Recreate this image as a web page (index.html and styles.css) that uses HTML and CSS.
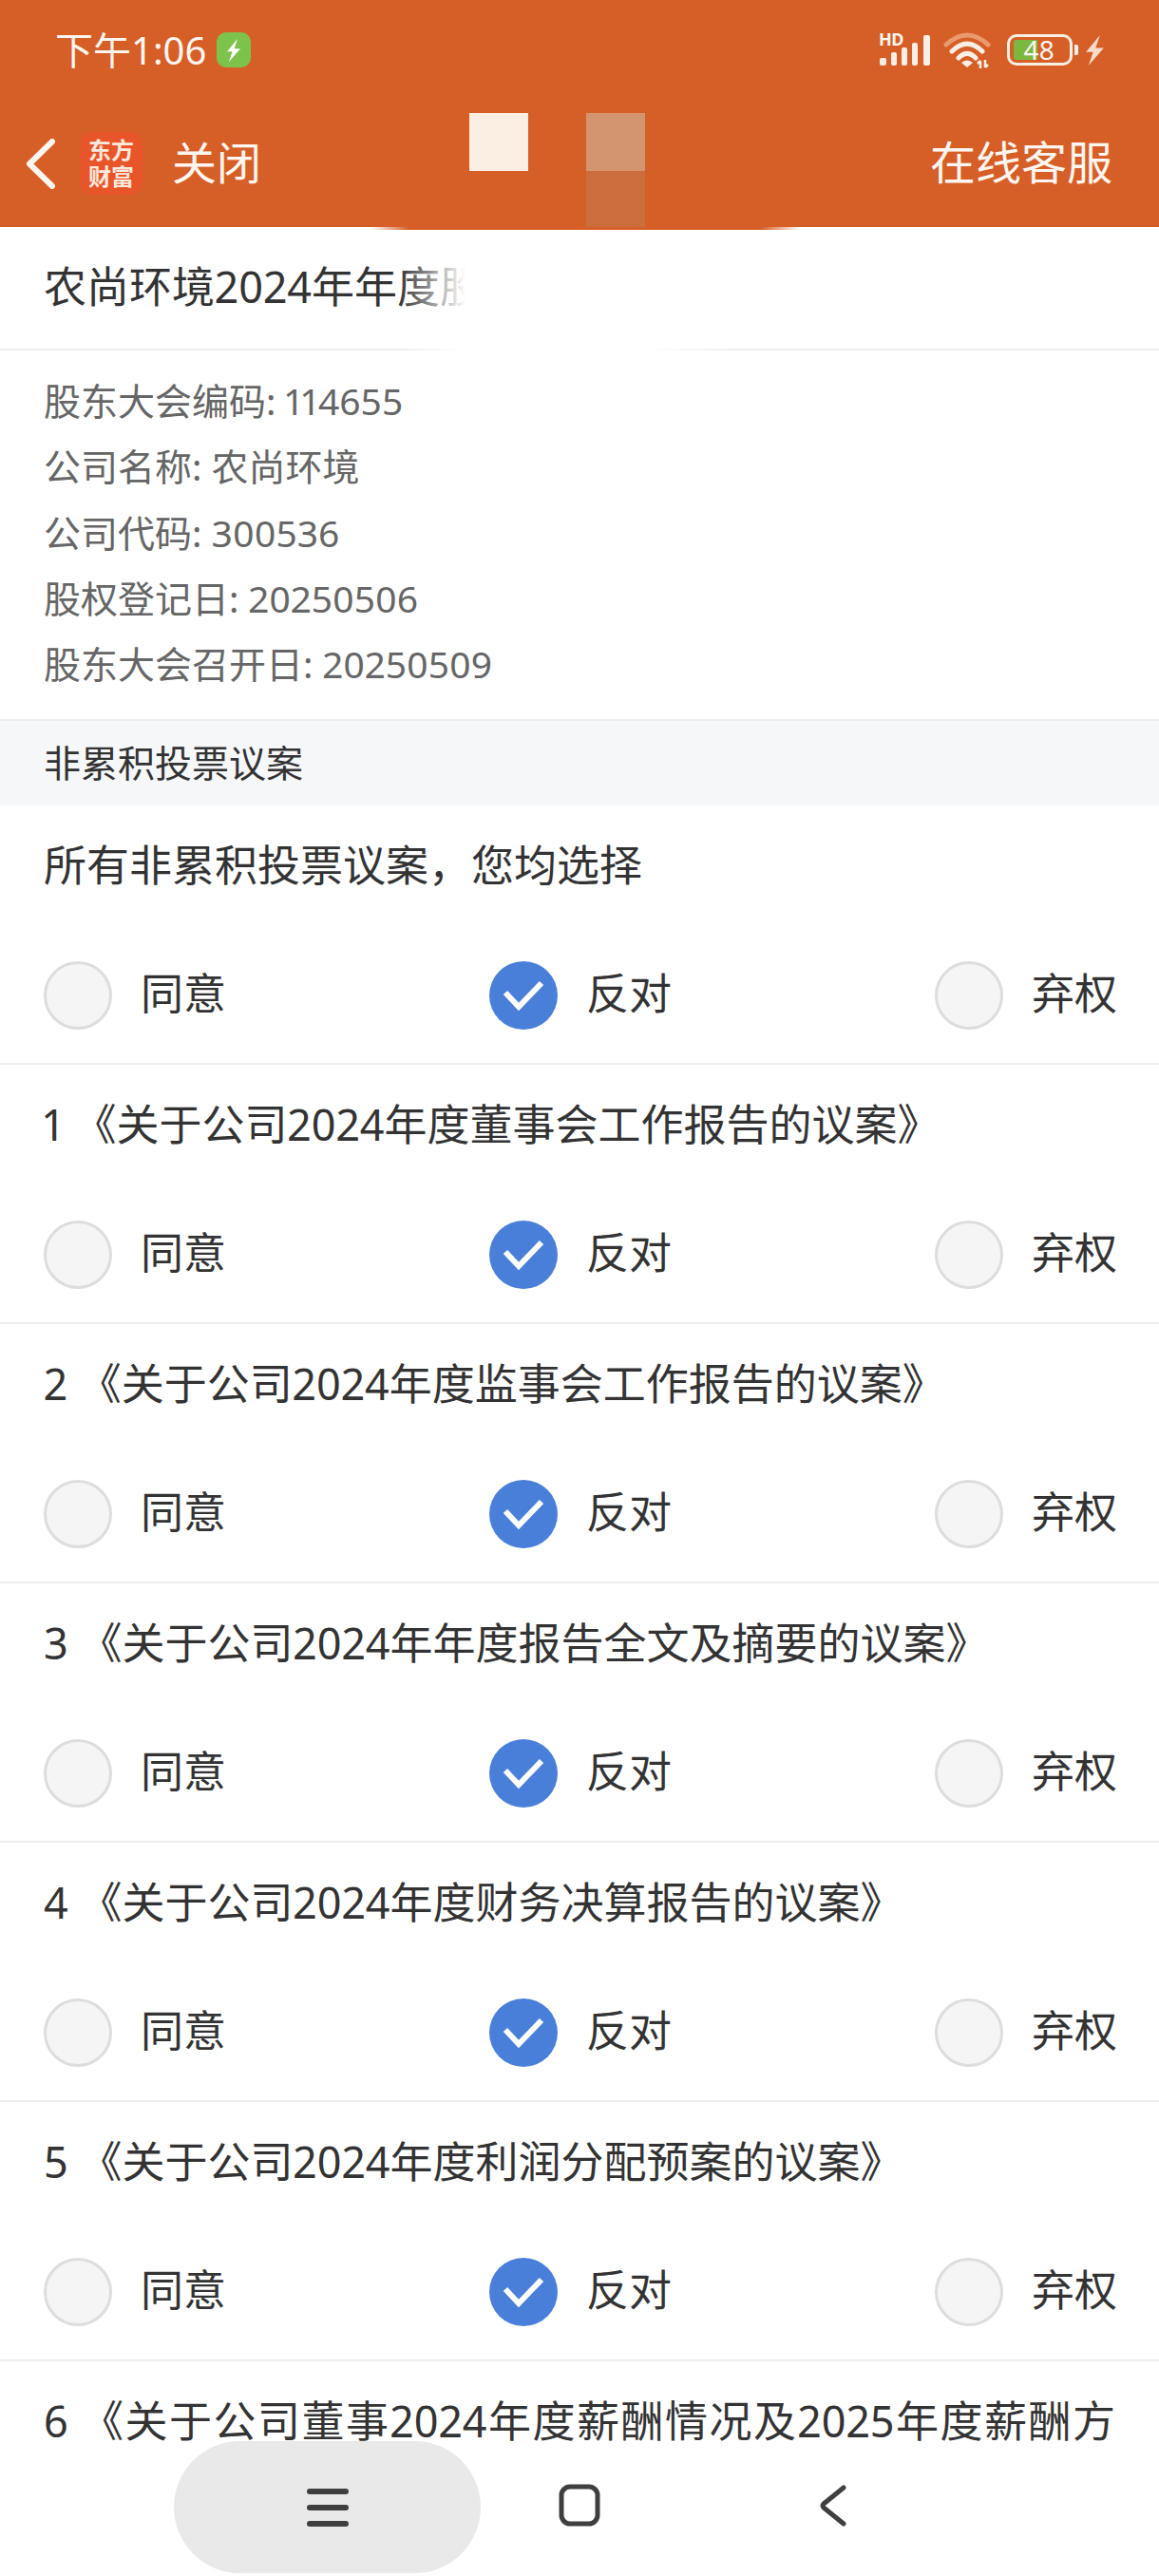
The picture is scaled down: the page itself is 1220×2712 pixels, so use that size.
FILE: index.html
```html
<!DOCTYPE html>
<html lang="zh-CN">
<head>
<meta charset="utf-8">
<title>股东大会投票</title>
<link rel="stylesheet" href="styles.css">
</head>
<body>
<div class="page">
  <header class="top">
    <div class="status">
      <div class="status-left">
        <span class="time">下午1:06</span>
        <span class="charge-badge">
          <svg class="charge-bolt" viewBox="0 0 14 24"><path d="M11 0 0 13.300h5.600L2 24 14 10.200H7.600z"/></svg>
        </span>
      </div>
      <div class="status-right">
        <span class="signal">
          <span class="hd">HD</span>
          <svg class="signal-bars" viewBox="0 0 56 32"><rect x="1" y="24" width="7" height="8" rx="2"/><rect x="13" y="18" width="6" height="14" rx="2"/><rect x="24" y="13" width="6" height="19" rx="2"/><rect x="35" y="8" width="6" height="24" rx="2"/><rect x="47" y="0" width="7" height="32" rx="2"/></svg>
        </span>
        <svg class="wifi" viewBox="0 0 52 40" fill="none">
          <path class="wifi-outer" d="M3 14Q25-6 47 14"/>
          <path class="wifi-arc" d="M9 21Q25 5 41 21"/>
          <path class="wifi-arc" d="M16 28Q25 19 34 28"/>
          <path class="wifi-dot" d="M19 33Q25 28 31 33L25 38z"/>
          <path class="wifi-arrow" d="M39 39V31M36 34l3-3M44 30v8M47 35l-3 3"/>
        </svg>
        <span class="battery">
          <span class="battery-fill"></span>
          <span class="battery-num">48</span>
        </span>
        <span class="battery-nub"></span>
        <svg class="side-bolt" viewBox="0 0 14 24"><path d="M11 0 0 13.300h5.600L2 24 14 10.200H7.600z"/></svg>
      </div>
    </div>
    <div class="bar">
      <svg class="back" viewBox="0 0 31 53" fill="none"><path d="M28 3 4 26.500 28 50"/></svg>
      <span class="logo"><span>东方</span><span>财富</span></span>
      <span class="close">关闭</span>
      <span class="service">在线客服</span>
    </div>
    <span class="patch patch-light"></span>
    <span class="patch patch-mid"></span>
    <span class="patch patch-low"></span>
  </header>
  <span class="edge"></span>

  <section class="meeting">
    <h1 class="meeting-title">农尚环境2024年年度股</h1>
    <span class="title-fade"></span>
  </section>

  <section class="info">
    <p>股东大会编码: 114655</p>
    <p>公司名称: 农尚环境</p>
    <p>公司代码: 300536</p>
    <p>股权登记日: 20250506</p>
    <p>股东大会召开日: 20250509</p>
  </section>

  <div class="section-head">非累积投票议案</div>

  <section class="row">
    <div class="row-title">所有非累积投票议案，您均选择</div>
    <div class="options">
      <div class="opt"><span class="radio"></span><span class="opt-label">同意</span></div>
      <div class="opt"><span class="radio on"><svg viewBox="0 0 72 72" fill="none"><path d="M17 33 31 48 55 23"/></svg></span><span class="opt-label">反对</span></div>
      <div class="opt"><span class="radio"></span><span class="opt-label">弃权</span></div>
    </div>
  </section>
  <section class="row">
    <div class="row-title">1 《关于公司2024年度董事会工作报告的议案》</div>
    <div class="options">
      <div class="opt"><span class="radio"></span><span class="opt-label">同意</span></div>
      <div class="opt"><span class="radio on"><svg viewBox="0 0 72 72" fill="none"><path d="M17 33 31 48 55 23"/></svg></span><span class="opt-label">反对</span></div>
      <div class="opt"><span class="radio"></span><span class="opt-label">弃权</span></div>
    </div>
  </section>
  <section class="row">
    <div class="row-title">2 《关于公司2024年度监事会工作报告的议案》</div>
    <div class="options">
      <div class="opt"><span class="radio"></span><span class="opt-label">同意</span></div>
      <div class="opt"><span class="radio on"><svg viewBox="0 0 72 72" fill="none"><path d="M17 33 31 48 55 23"/></svg></span><span class="opt-label">反对</span></div>
      <div class="opt"><span class="radio"></span><span class="opt-label">弃权</span></div>
    </div>
  </section>
  <section class="row">
    <div class="row-title">3 《关于公司2024年年度报告全文及摘要的议案》</div>
    <div class="options">
      <div class="opt"><span class="radio"></span><span class="opt-label">同意</span></div>
      <div class="opt"><span class="radio on"><svg viewBox="0 0 72 72" fill="none"><path d="M17 33 31 48 55 23"/></svg></span><span class="opt-label">反对</span></div>
      <div class="opt"><span class="radio"></span><span class="opt-label">弃权</span></div>
    </div>
  </section>
  <section class="row">
    <div class="row-title">4 《关于公司2024年度财务决算报告的议案》</div>
    <div class="options">
      <div class="opt"><span class="radio"></span><span class="opt-label">同意</span></div>
      <div class="opt"><span class="radio on"><svg viewBox="0 0 72 72" fill="none"><path d="M17 33 31 48 55 23"/></svg></span><span class="opt-label">反对</span></div>
      <div class="opt"><span class="radio"></span><span class="opt-label">弃权</span></div>
    </div>
  </section>
  <section class="row">
    <div class="row-title">5 《关于公司2024年度利润分配预案的议案》</div>
    <div class="options">
      <div class="opt"><span class="radio"></span><span class="opt-label">同意</span></div>
      <div class="opt"><span class="radio on"><svg viewBox="0 0 72 72" fill="none"><path d="M17 33 31 48 55 23"/></svg></span><span class="opt-label">反对</span></div>
      <div class="opt"><span class="radio"></span><span class="opt-label">弃权</span></div>
    </div>
  </section>
  <section class="row">
    <div class="row-title">6 《关于公司董事2024年度薪酬情况及2025年度薪酬方案的议案》</div>
  </section>

  <nav class="nav">
    <span class="nav-pill">
      <svg class="nav-menu" viewBox="0 0 44 40"><rect y="0" width="44" height="6" rx="3"/><rect y="17" width="44" height="6" rx="3"/><rect y="34" width="44" height="6" rx="3"/></svg>
    </span>
    <svg class="nav-home" viewBox="0 0 44 45" fill="none"><rect x="3" y="3" width="38" height="39" rx="9"/></svg>
    <svg class="nav-back" viewBox="0 0 30 44" fill="none"><path d="M26 3 5 20a3 3 0 0 0 0 4L26 41"/></svg>
  </nav>
</div>
</body>
</html>
```

FILE: styles.css
```css
* { box-sizing: border-box; }

html, body {
  margin: 0;
  padding: 0;
  background: #fff;
}

.page {
  position: relative;
  width: 1220px;
  height: 2712px;
  overflow: hidden;
  font-family: "Noto Sans", "Noto Sans CJK SC", sans-serif;
  font-variant-numeric: proportional-nums;
  color: #333;
}

/* header */
.top {
  position: relative;
  height: 239px;
  background: #d65f27;
  color: #fdf6f0;
}

.status {
  display: flex;
  align-items: center;
  justify-content: space-between;
  height: 105px;
  padding: 0 58px 0 58px;
}

.status-left,
.status-right {
  display: flex;
  align-items: center;
}

.time {
  font-size: 40px;
  line-height: 48px;
  font-variant-numeric: tabular-nums;
}

.charge-badge {
  display: flex;
  align-items: center;
  justify-content: center;
  width: 36px;
  height: 37px;
  margin-left: 11px;
  border-radius: 10px;
  background: #7dc34b;
}

.charge-bolt {
  width: 14px;
  height: 24px;
  fill: #fff;
}

.signal {
  position: relative;
  width: 56px;
  height: 34px;
  margin-top: 1px;
}

.hd {
  position: absolute;
  left: 0;
  top: -4px;
  font-size: 18px;
  line-height: 18px;
  font-weight: 700;
  letter-spacing: -0.5px;
}

.signal-bars {
  display: block;
  width: 56px;
  height: 34px;
  fill: #fbeee4;
}

.wifi {
  width: 52px;
  height: 40px;
  margin-left: 12px;
}

.wifi-outer {
  stroke: #ea9a6f;
  stroke-width: 5;
  stroke-linecap: round;
}

.wifi-arc {
  stroke: #fbeee4;
  stroke-width: 5;
  stroke-linecap: round;
}

.wifi-dot {
  fill: #fbeee4;
}

.wifi-arrow {
  stroke: #fbeee4;
  stroke-width: 2.500;
}

.battery {
  position: relative;
  display: flex;
  align-items: center;
  justify-content: flex-end;
  width: 69px;
  height: 33px;
  margin-left: 15px;
  padding-right: 16px;
  border: 3px solid #fbeee4;
  border-radius: 10px;
}

.battery-fill {
  position: absolute;
  left: 4px;
  top: 3px;
  width: 25px;
  height: 21px;
  background: #7ab83f;
  border-radius: 2px 0 0 2px;
}

.battery-num {
  position: relative;
  font-size: 28px;
  line-height: 27px;
}

.battery-nub {
  width: 4px;
  height: 11px;
  margin-left: 2px;
  border-radius: 0 2px 2px 0;
  background: #fbeee4;
}

.side-bolt {
  width: 19px;
  height: 32px;
  margin-left: 8px;
  fill: #f6dccb;
}

.bar {
  display: flex;
  align-items: center;
  height: 134px;
  padding: 0 49px 0 27px;
}

.back {
  width: 31px;
  height: 53px;
  stroke: #fdf6f0;
  stroke-width: 6;
  stroke-linecap: round;
  stroke-linejoin: round;
}

.logo {
  display: flex;
  flex-direction: column;
  align-items: center;
  justify-content: center;
  width: 66px;
  height: 66px;
  margin-left: 26px;
  border-radius: 14px;
  background: #e9552a;
  font-size: 24px;
  line-height: 28px;
  font-weight: 700;
  color: #fde9dc;
}

.close {
  margin-left: 31px;
  font-size: 47px;
  line-height: 60px;
  margin-top: -3px;
}

.service {
  margin-left: auto;
  font-size: 48px;
  line-height: 60px;
  margin-top: -3px;
}

/* masked area over the header */
.patch {
  position: absolute;
  left: 617px;
  top: 119px;
  width: 62px;
  height: 61px;
}

.patch-light {
  left: 494px;
  background: #fbeee2;
}

.patch-mid {
  background: #d39470;
}

.patch-low {
  top: 180px;
  height: 62px;
  background: #cc6e3c;
}

.edge {
  position: absolute;
  left: 390px;
  top: 239px;
  width: 452px;
  height: 3px;
  background: linear-gradient(90deg, rgba(214, 95, 39, 0), #d65f27 9%, #d65f27 91%, rgba(214, 95, 39, 0));
}

/* meeting */
.meeting {
  position: relative;
  display: flex;
  align-items: center;
  height: 130px;
  padding: 0 46px 3px;
  border-bottom: 2px solid #eeeeee;
}

.meeting-title {
  margin: 0;
  font-size: 45px;
  line-height: 60px;
  font-weight: 400;
}

.title-fade {
  position: absolute;
  left: 420px;
  top: 5px;
  width: 360px;
  height: 125px;
  background: linear-gradient(90deg, rgba(255, 255, 255, 0), #fff 19.500%, #fff 72%, rgba(255, 255, 255, 0));
}

.info {
  height: 388px;
  padding: 18px 46px 0;
}

.info p {
  margin: 0;
  font-size: 39px;
  line-height: 69.25px;
  color: #666;
}

.section-head {
  display: flex;
  align-items: center;
  height: 91px;
  padding: 0 46px 1px;
  border-top: 2px solid #eeeeee;
  background: #f6f7f9;
  font-size: 39px;
  line-height: 60px;
}

/* vote rows */
.row {
  height: 273px;
  border-bottom: 2px solid #eeeeee;
}

.row-title {
  padding: 31px 46px 32px;
  font-size: 45px;
  line-height: 64px;
  text-align: justify;
}

.options {
  display: flex;
  justify-content: space-between;
  margin-top: 37px;
  padding: 0 44px 0 46px;
}

.opt {
  display: flex;
  align-items: center;
  gap: 30px;
  width: 192px;
  height: 72px;
  font-size: 45px;
}

.opt-label {
  padding-bottom: 4px;
  line-height: 60px;
}

.radio {
  flex: none;
  width: 72px;
  height: 72px;
  border: 3px solid #dddddd;
  border-radius: 50%;
  background: #f5f5f5;
}

.radio.on {
  border: 0;
  background: #4a7fd9;
}

.radio.on svg {
  display: block;
  width: 72px;
  height: 72px;
  stroke: #fff;
  stroke-width: 6;
}

/* system nav */
.nav {
  position: absolute;
  left: 0;
  right: 0;
  bottom: 0;
  display: flex;
  align-items: flex-start;
  height: 142px;
  padding-left: 183px;
  background: #fff;
}

.nav-pill {
  display: flex;
  align-items: center;
  justify-content: center;
  width: 323px;
  height: 139px;
  border-radius: 70px;
  background: #e9e9e9;
}

.nav-menu {
  width: 44px;
  height: 40px;
  fill: #3f3f3f;
}

.nav-home {
  width: 44px;
  height: 45px;
  margin: 45px 0 0 82px;
  stroke: #3f3f3f;
  stroke-width: 5;
}

.nav-back {
  width: 30px;
  height: 44px;
  margin: 46px 0 0 230px;
  stroke: #3f3f3f;
  stroke-width: 5;
  stroke-linecap: round;
  stroke-linejoin: round;
}
```
